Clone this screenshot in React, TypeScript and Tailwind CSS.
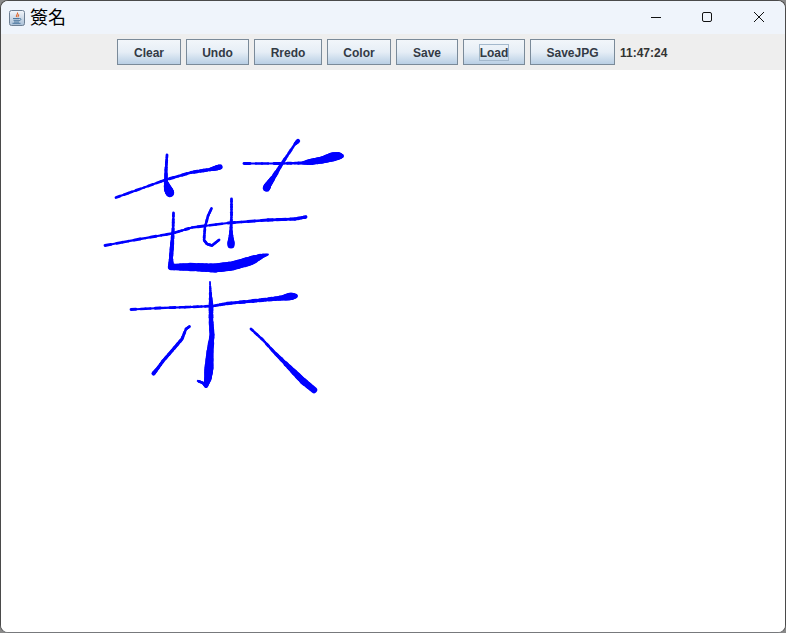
const buttons = [
    { label: 'Clear', width: 'w-[64px]' },
    { label: 'Undo', width: 'w-[63px]' },
    { label: 'Rredo', width: 'w-[68px]' },
    { label: 'Color', width: 'w-[64px]' },
    { label: 'Save', width: 'w-[62px]' },
    { label: 'Load', width: 'w-[62px]', focused: true },
    { label: 'SaveJPG', width: 'w-[85px]' },
];

// x, y, pen width
type Pt = [number, number, number];

const strokes: Pt[][] = [
    [[116, 197.5, 2.5], [140, 189, 2.5], [165, 180, 2.5], [191, 172.5, 3], [210, 169.5, 3.5], [216, 168, 5], [220, 167, 5]],
    [[167, 155, 2.5], [166, 170, 3], [166, 182, 4], [168, 189, 8], [170, 193, 9]],
    [[244, 163.5, 2.5], [280, 163.5, 2.5], [302, 163, 3], [310, 162, 6], [322, 160, 7], [332, 157, 9], [338, 156, 7], [342, 156, 3]],
    [[298, 141, 4], [295, 144, 2.5], [283, 162, 3], [273, 178, 5], [268, 185, 6.5], [266.5, 188, 7.5]],
    [[105, 245.5, 2.5], [140, 239, 2.5], [172, 233.5, 2.5], [192, 227.5, 2.5], [228, 223, 2.5], [268, 220, 3], [295, 219, 3], [303, 217.5, 3], [306, 217, 3]],
    [[173.5, 213, 2.5], [173, 232, 3], [172, 245, 4], [171, 258, 4], [171, 267, 6], [190, 267, 8], [215, 268, 9], [232, 266, 9], [250, 261, 9], [262, 256, 4], [268, 254.5, 1.5]],
    [[211.5, 208.5, 2.5], [208, 216, 2.5], [205, 227, 2.5], [204, 240, 2.5], [207, 244, 2.5], [212, 245.5, 2.5], [219, 240, 2.5]],
    [[231.5, 199, 2.5], [231.5, 215, 2.5], [231, 230, 3], [231, 238, 5], [231, 245, 8]],
    [[131, 309.5, 2.5], [160, 308, 2.5], [190, 307, 2.5], [213, 306, 2.5], [227, 303.5, 3], [253, 301, 3.5], [272, 299, 4], [282, 298, 5], [290, 296.5, 7.5], [296, 296, 3.5]],
    [[210, 282, 1.5], [210.5, 295, 3], [211, 305, 4.5], [211, 320, 4.5], [212, 335, 5], [210, 352, 7], [209, 368, 9], [208, 378, 7], [206, 386, 3.5], [203, 383, 2.5], [198, 381, 2.5]],
    [[189.5, 326.5, 2.5], [186, 329, 2.5], [182, 339, 3], [176, 346, 3], [170, 353, 3], [163, 361, 3], [158, 368, 3], [153.5, 373.5, 4]],
    [[251, 329, 2.5], [263, 340, 2.5], [274, 352, 3], [284, 362, 4], [293, 371, 5.5], [303, 381, 6.5], [314, 390, 6]],
];

// pen gets wider gradually, so cut each segment into small steps.
// the small wobble makes it look hand drawn like the original
function segments(points: Pt[]) {
    const out: { x1: number; y1: number; x2: number; y2: number; w: number }[] = [];
    let n = 0;
    for (let i = 0; i < points.length - 1; i++) {
        const [ax, ay, aw] = points[i];
        const [bx, by, bw] = points[i + 1];
        const steps = 6;
        for (let s = 0; s < steps; s++) {
            const t1 = s / steps;
            const t2 = (s + 1) / steps;
            n++;
            out.push({
                x1: ax + (bx - ax) * t1,
                y1: ay + (by - ay) * t1,
                x2: ax + (bx - ax) * t2,
                y2: ay + (by - ay) * t2,
                w: aw + (bw - aw) * t1 + Math.sin(n * 2.3) * 0.4,
            });
        }
    }
    return out;
}

const JavaIcon = () => (
    <svg width="16" height="16" viewBox="0 0 16 16" className="shrink-0">
        <defs>
            <linearGradient id="javaBg" x1="0" y1="0" x2="0" y2="1">
                <stop offset="0" stopColor="#f4f7fb" />
                <stop offset="1" stopColor="#a9bfd6" />
            </linearGradient>
        </defs>
        <rect x="0.5" y="0.5" width="15" height="15" rx="2" fill="url(#javaBg)" stroke="#6d7f93" />
        <path d="M8.5 2.5c1 1.5-2 2.5-1 4.5M10 4.5c-1 1-1.5 1.5-.8 2.8" fill="none" stroke="#e0662a" strokeWidth="1.1" />
        <path d="M4 8.5h6.5M4.5 10.3h5.5M5 12h5M3.5 13.3h8" fill="none" stroke="#3f6d96" strokeWidth="0.9" />
        <path d="M10.5 8.5c2-.5 2 2-.5 2.2" fill="none" stroke="#3f6d96" strokeWidth="0.8" />
    </svg>
);

const App = () => {
    return (
        <div className="w-[786px] h-[633px] bg-[#8a8a8a] overflow-hidden">
            <div className="w-full h-full flex flex-col overflow-hidden rounded-[8px] border border-[#4a4a4a] border-b-[#77797c] bg-white">
                {/* Title bar */}
                <div className="h-[33px] shrink-0 bg-[#eff4fb] flex items-center pl-[8px]">
                    <JavaIcon />
                    <span className="ml-[5px] mb-[3px] text-[18px] leading-none text-black font-['Noto_Sans_CJK_TC',sans-serif]">簽名</span>
                    <div className="ml-auto flex items-center text-black mb-[1px]">
                        <div className="w-[51px] flex justify-center">
                            <svg width="12" height="12" viewBox="0 0 12 12"><path d="M1 6.5h10" stroke="#111" strokeWidth="1" /></svg>
                        </div>
                        <div className="w-[51px] flex justify-center">
                            <svg width="12" height="12" viewBox="0 0 12 12"><rect x="1.5" y="1.5" width="9" height="9" rx="1.5" fill="none" stroke="#111" strokeWidth="1" /></svg>
                        </div>
                        <div className="w-[51px] flex justify-center ml-[1px] mr-[1px]">
                            <svg width="12" height="12" viewBox="0 0 12 12"><path d="M1 1l10 10M11 1L1 11" stroke="#111" strokeWidth="1" /></svg>
                        </div>
                    </div>
                </div>

                {/* Toolbar */}
                <div className="h-[36px] shrink-0 bg-[#eeeeee] flex items-center pl-[116px] gap-[5px] font-['Liberation_Sans',sans-serif] text-[12px] font-bold text-[#333a45]">
                    {buttons.map(b => (
                        <button
                            key={b.label}
                            className={`${b.width} h-[26px] flex items-center justify-center border border-[#7a8a99] bg-gradient-to-b from-[#f2f6fa] via-[#e6eef6] to-[#b9cfe4]`}
                        >
                            <span className={b.focused ? 'h-[17px] leading-[16px] border border-[#a3b8cc]' : 'pt-[1px]'}>{b.label}</span>
                        </button>
                    ))}
                    <span className="pt-[1px] text-[#333333]">11:47:24</span>
                </div>

                {/* Drawing surface */}
                <div className="flex-1 bg-white min-h-0">
                    <svg width="784" height="562" viewBox="1 70 784 562" className="block">
                        {strokes.map((points, i) => (
                            <g key={i} stroke="#0000ff" strokeLinecap="round">
                                {segments(points).map((s, j) => (
                                    <line key={j} x1={s.x1} y1={s.y1} x2={s.x2} y2={s.y2} strokeWidth={s.w} />
                                ))}
                            </g>
                        ))}
                    </svg>
                </div>
            </div>
        </div>
    );
};

export default App;
